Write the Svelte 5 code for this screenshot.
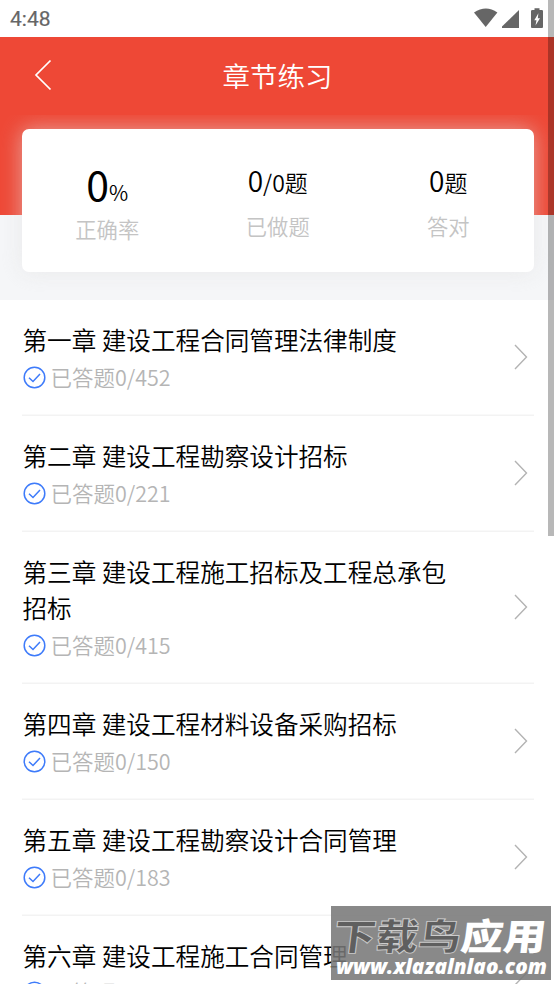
<script>
  const chapters = [
    { title: '第一章 建设工程合同管理法律制度', total: 452 },
    { title: '第二章 建设工程勘察设计招标', total: 221 },
    { title: '第三章 建设工程施工招标及工程总承包招标', total: 415 },
    { title: '第四章 建设工程材料设备采购招标', total: 150 },
    { title: '第五章 建设工程勘察设计合同管理', total: 183 },
    { title: '第六章 建设工程施工合同管理', total: 274 }
  ];
</script>

<div class="screen">
  <div class="status">
    <span class="time">4:48</span>
    <svg class="sys" width="70" height="20" viewBox="0 0 70 20" fill="#666">
      <path d="M0 3.400Q12-4.400 23.400 3.400L11.700 18Z" />
      <path d="M28 19V17.500L45 1V19Z" />
      <path fill-rule="evenodd" d="M58.500 1H60.500V-.8H65.500V1H67.800Q69 1 69 2V18Q69 19 68 19H58Q57 19 57 18V2Q57 1 58.500 1ZM64.400 4.200L60.300 11.200H62.500L61.500 16.500L66 9.300H63.800Z" />
    </svg>
  </div>
  <header>
    <svg class="back" width="18" height="32" viewBox="0 0 18 32" fill="none" stroke="#fff" stroke-width="1.7"><path d="M16.500 1.500L2 16L16.500 30.500" /></svg>
    <h1>章节练习</h1>
  </header>
  <section class="summary">
    <div class="card">
      <div class="stat first">
        <div class="value"><span class="big">0</span><span class="pct">%</span></div>
        <div class="label">正确率</div>
      </div>
      <div class="stat">
        <div class="value"><span class="num">0</span>/0题</div>
        <div class="label">已做题</div>
      </div>
      <div class="stat">
        <div class="value"><span class="num">0</span>题</div>
        <div class="label">答对</div>
      </div>
    </div>
  </section>
  <main>
    {#each chapters as c}
      <div class="row">
        <div class="info">
          <div class="title">{c.title}</div>
          <div class="sub">
            <svg width="23" height="23" viewBox="0 0 23 23" fill="none" stroke="#3e7bfa" stroke-width="1.5"><circle cx="11.500" cy="11.500" r="10.300" /><path d="M6 11.700L10 15.500L17 8" /></svg>
            <span>已答题0/{c.total}</span>
          </div>
        </div>
        <svg class="chev" width="14" height="26" viewBox="0 0 14 26" fill="none" stroke="#b3b3b3" stroke-width="1.4"><path d="M1 1L12.500 13L1 25" /></svg>
      </div>
    {/each}
  </main>
  <div class="scroll"></div>
  <div class="mark">
    <div class="name"><span class="outline">下载鸟</span>应用</div>
    <div class="url">www.xlazalnlao.com</div>
  </div>
</div>

<style>
  .screen {
    position: relative;
    width: 554px;
    height: 984px;
    overflow: hidden;
    background: #fff;
    color: #000;
    font-family: 'Noto Sans CJK SC', sans-serif;
    font-weight: 350;
  }
  .status {
    height: 37px;
    box-sizing: border-box;
    padding: 0 10px;
    display: flex;
    align-items: center;
    justify-content: space-between;
  }
  .time { font: 400 21px/37px Roboto, sans-serif; color: #666; padding-top: 1px; -webkit-text-stroke: 0.2px #666; }
  .sys { overflow: visible; }
  header {
    height: 78px;
    background: #ee4836;
    display: flex;
    justify-content: center;
    align-items: center;
    position: relative;
  }
  .back { position: absolute; left: 34px; top: 22px; }
  h1 { margin: 0 0 2px 1px; font-size: 27.500px; line-height: 40px; font-weight: 350; color: #fff; }
  .summary {
    height: 185px;
    box-sizing: border-box;
    padding: 14px 20.500px 28px 22px;
    background: linear-gradient(#ee4836 100px, #f5f6f8 100px);
  }
  .card {
    height: 143px;
    background: #fff;
    border-radius: 7px;
    box-shadow: 0 0 21px rgba(225, 225, 225, 0.6);
    display: flex;
  }
  .stat { flex: 1; text-align: center; padding-top: 31px; }
  .value { height: 46px; line-height: 40px; font-size: 23px; white-space: nowrap; }
  .num { font-size: 28px; }
  .big { font-size: 41px; font-weight: 400; }
  .pct { font-size: 21px; }
  .label { font-size: 21.300px; line-height: 40px; color: #c4c4c4; }
  .first { padding-top: 34px; }
  .first .value { height: 46px; }
  .row {
    margin: 0 20.500px 0 22px;
    padding: 21px 0 21.800px;
    box-shadow: inset 0 -1.500px #f3f3f3;
    display: flex;
    align-items: center;
    justify-content: space-between;
  }
  .info { width: 440px; }
  .title { font-size: 24.600px; line-height: 36.600px; padding-left: 0.500px; }
  .sub {
    height: 36.400px;
    display: flex;
    align-items: center;
    gap: 5px;
    font-size: 21.500px;
    color: #b5b5b5;
  }
  .sub svg { margin: 3px 0 0 0.500px; }
  .sub span { padding-top: 1px; }
  .chev { margin-right: 6px; }
  .scroll { position: absolute; top: 0; right: 0; width: 6px; height: 536px; background: rgba(0, 0, 0, 0.28); }
  .mark {
    position: absolute;
    left: 331px;
    top: 906px;
    width: 220px;
    height: 74px;
    background: rgba(120, 120, 120, 0.87);
    color: #fff;
    white-space: nowrap;
  }
  .name {
    position: absolute;
    left: 3px;
    top: 6px;
    font-size: 42.500px;
    line-height: 46px;
    font-weight: 900;
    transform: scaleY(0.86) skewX(-6deg);
  }
  .outline { color: #5f5f5f; -webkit-text-stroke: 1px #ccc; }
  .url {
    position: absolute;
    left: 5px;
    top: 47px;
    font: italic 800 20.700px/26px 'Open Sans', sans-serif;
  }
</style>
